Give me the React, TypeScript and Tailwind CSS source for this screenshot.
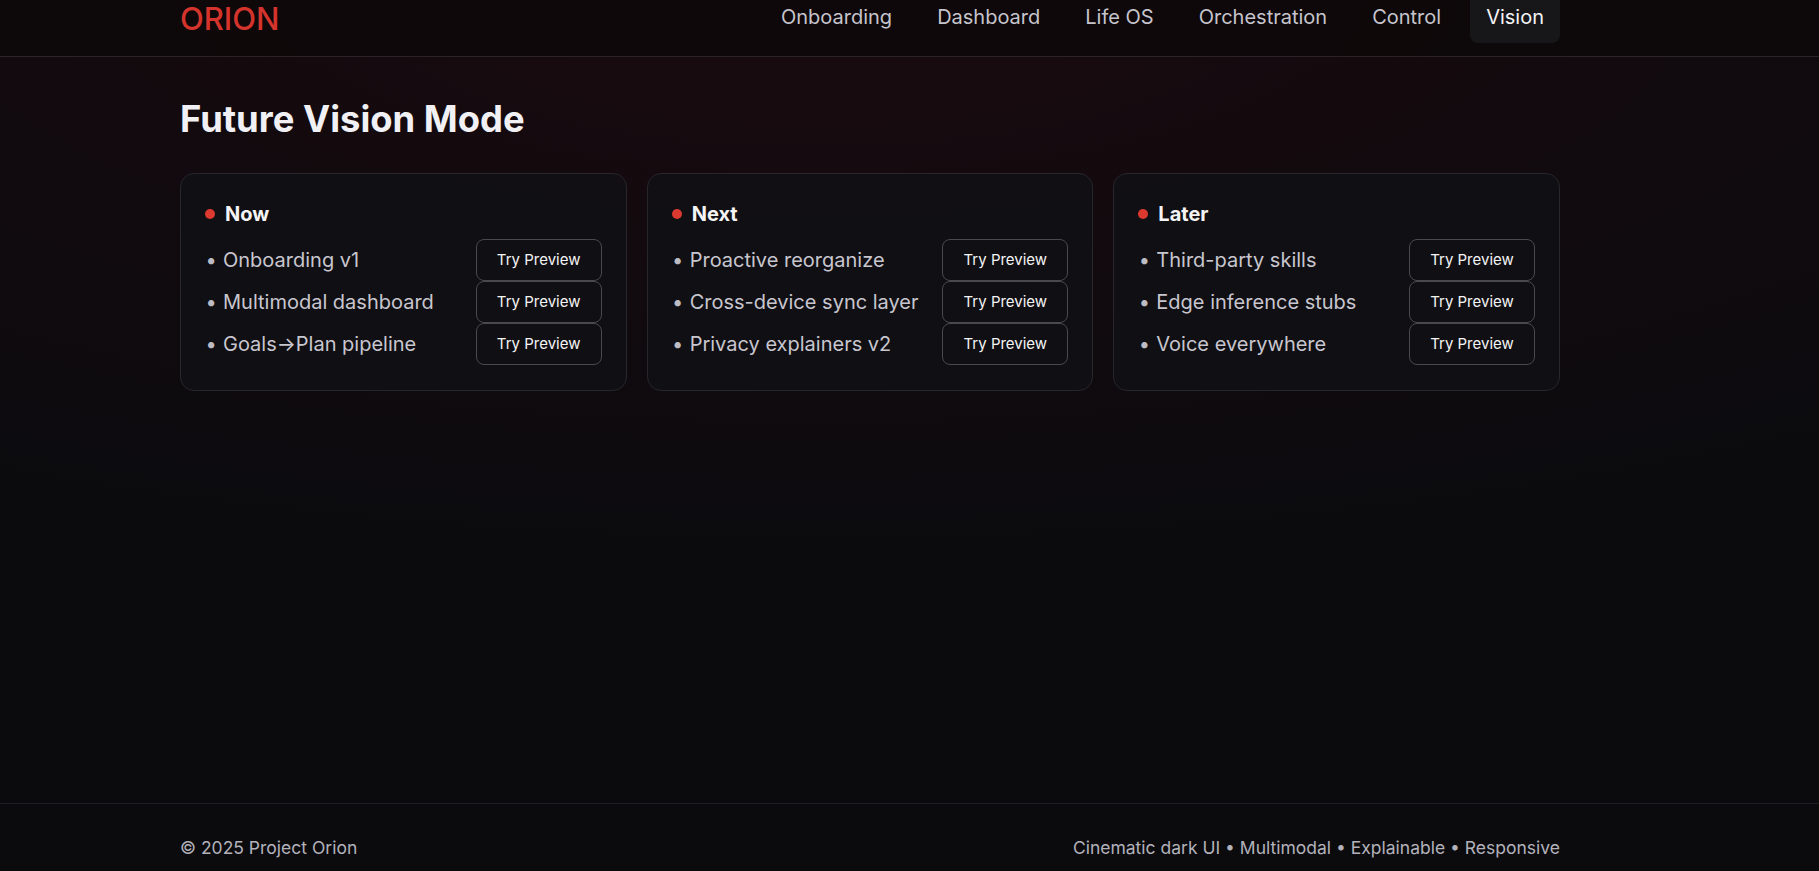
import React from "react";

const columns = [
  { title: "Now", items: ["Onboarding v1", "Multimodal dashboard", "Goals→Plan pipeline"] },
  { title: "Next", items: ["Proactive reorganize", "Cross-device sync layer", "Privacy explainers v2"] },
  { title: "Later", items: ["Third-party skills", "Edge inference stubs", "Voice everywhere"] },
];

const nav = ["Onboarding", "Dashboard", "Life OS", "Orchestration", "Control", "Vision"];

export default function App() {
  return (
    <div className="min-h-screen w-full flex flex-col bg-[#0b0b0e] bg-[radial-gradient(ellipse_110%_75%_at_45%_0%,#1a0b10_0%,#120a0e_40%,#0b0b0e_85%)] font-['Inter','Noto_Sans',sans-serif] overflow-hidden">
      <header className="h-[57px] shrink-0 border-b border-[#2a2426] bg-[#0c0709]/80">
        <div className="ml-[180px] w-[1380px] h-[34px] flex items-center justify-between">
          <div className="mt-[4px] text-[31px] leading-[30px] font-medium text-[#d4342c]">ORION</div>
          <nav className="flex items-center gap-[13px]">
            {nav.map((n) => (
              <div
                key={n}
                className={
                  n === "Vision"
                    ? "px-4 py-3 rounded-lg bg-[#17171a] text-[20px] leading-[28px] text-[#f4f4f5]"
                    : "px-4 py-3 rounded-lg text-[20px] leading-[28px] text-[#c6c4cc]"
                }
              >
                {n}
              </div>
            ))}
          </nav>
        </div>
      </header>

      <main className="flex-1">
        <div className="ml-[180px] w-[1380px] pt-[42px]">
          <h1 className="text-[36.4px] leading-[40px] font-bold text-[#f1f1f5]">Future Vision Mode</h1>
          <div className="mt-[34px] grid grid-cols-3 gap-5">
            {columns.map((c) => (
              <div
                key={c.title}
                className="rounded-[14px] border border-[#27262b] bg-[#111014]/90 px-6 pt-[26px] pb-[25px]"
              >
                <div className="flex items-center gap-2.5">
                  <span className="w-2.5 h-2.5 rounded-full bg-[#dc3a30]" />
                  <span className="text-[20px] leading-[28px] font-bold text-[#f4f4f5]">{c.title}</span>
                </div>
                <div className="mt-[11px] flex flex-col">
                  {c.items.map((it) => (
                    <div key={it} className="h-[42px] flex items-center justify-between">
                      <div className="flex items-center text-[20px] leading-[28px] text-[#c8c6cf]">
                        <span className="w-3 text-center text-[#bdbcc4]">•</span>
                        <span className="ml-1.5">{it}</span>
                      </div>
                      <button className="w-[126px] h-[42px] rounded-lg border border-[#4a494f] bg-transparent text-[15px] font-normal text-[#f4f4f5]">
                        Try Preview
                      </button>
                    </div>
                  ))}
                </div>
              </div>
            ))}
          </div>
        </div>
      </main>

      <footer className="h-[68px] shrink-0 border-t border-[#1f1e22] bg-[#0b0b0e]">
        <div className="ml-[180px] w-[1380px] pt-8 flex items-center justify-between text-[17.5px] leading-[24px] text-[#b3b2bb]">
          <span>© 2025 Project Orion</span>
          <span>Cinematic dark UI • Multimodal • Explainable • Responsive</span>
        </div>
      </footer>
    </div>
  );
}
